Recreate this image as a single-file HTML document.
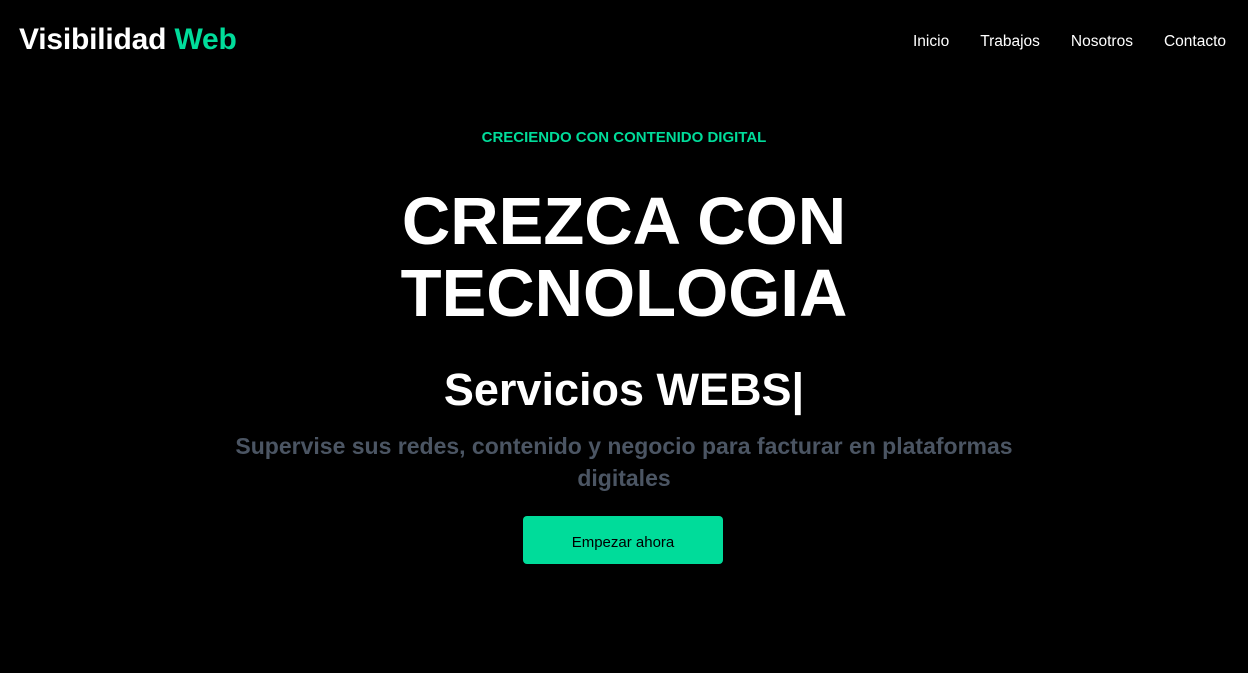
<!DOCTYPE html>
<html><head><meta charset="utf-8"><style>
*{margin:0;padding:0;box-sizing:border-box}
body{width:1248px;height:673px;background:#000;font-family:"Liberation Sans",sans-serif;color:#fff;position:relative;overflow:hidden}
.logo{position:absolute;left:19px;top:23px;font-size:30px;font-weight:bold;letter-spacing:-0.2px}
.logo span{color:#00dc9a}
nav{position:absolute;top:33px;right:22px;font-size:15.5px}
nav a{color:#fff;text-decoration:none;margin-left:31px}
.c{position:absolute;left:0;width:1248px;text-align:center}
.tag{top:129px;font-size:15px;font-weight:bold;color:#00dc9a}
h1{top:186px;font-size:67px;line-height:72px;font-weight:bold;letter-spacing:0px}
h2{top:364px;font-size:45px;line-height:52px;font-weight:bold}
p.s{top:430px;font-size:23px;line-height:32px;font-weight:bold;color:#4b5563}
.btn{position:absolute;left:523px;top:516px;width:200px;height:48px;background:#00dc9a;border-radius:4px;color:#000;font-size:15px;text-align:center;line-height:54px}
</style></head><body>
<div class="logo">Visibilidad <span>Web</span></div>
<nav><a>Inicio</a><a>Trabajos</a><a>Nosotros</a><a>Contacto</a></nav>
<div class="c tag">CRECIENDO CON CONTENIDO DIGITAL</div>
<h1 class="c">CREZCA CON<br>TECNOLOGIA</h1>
<h2 class="c">Servicios WEBS|</h2>
<p class="c s">Supervise sus redes, contenido y negocio para facturar en plataformas<br>digitales</p>
<div class="btn">Empezar ahora</div>
</body></html>
